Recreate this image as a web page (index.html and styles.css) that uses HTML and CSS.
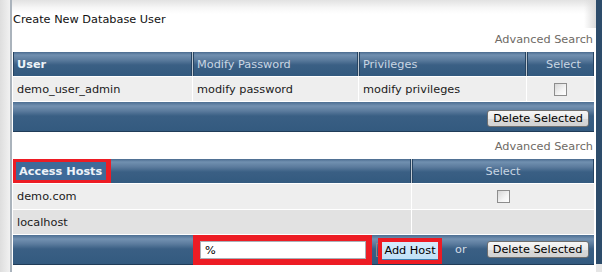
FILE: index.html
```html
<!DOCTYPE html>
<html>
<head>
<meta charset="utf-8">
<link rel="stylesheet" href="styles.css">
</head>
<body>
<div class="frame">
  <div class="side"></div>
  <div class="main">
    <div class="title">Create New Database User</div>
    <div class="adv">Advanced Search</div>
    <div class="grid">
      <div class="row head cols4">
        <div class="cell hc strong">User</div>
        <div class="cell hc">Modify Password</div>
        <div class="cell hc">Privileges</div>
        <div class="cell hc center">Select</div>
      </div>
      <div class="row body cols4 r1">
        <div class="cell">demo_user_admin</div>
        <div class="cell">modify password</div>
        <div class="cell">modify privileges</div>
        <div class="cell center"><input type="checkbox" class="cb"></div>
      </div>
      <div class="foot end">
        <button class="btn">Delete Selected</button>
      </div>
    </div>
    <div class="adv adv2">Advanced Search</div>
    <div class="grid">
      <div class="row head cols2">
        <div class="cell hc strong flush"><span class="mark hl">Access Hosts</span></div>
        <div class="cell hc center">Select</div>
      </div>
      <div class="row body cols2 r1 tall">
        <div class="cell">demo.com</div>
        <div class="cell center"><input type="checkbox" class="cb"></div>
      </div>
      <div class="row body cols2 r2">
        <div class="cell">localhost</div>
        <div class="cell"></div>
      </div>
      <div class="foot add">
        <span class="mark inbox"><input type="text" class="txt" value="%"></span>
        <span class="bracket"></span>
        <span class="mark addbox"><span class="addbtn">Add Host</span></span>
        <span class="or">or</span>
        <button class="btn">Delete Selected</button>
      </div>
    </div>
  </div>
  <div class="edge"></div>
</div>
</body>
</html>
```
FILE: styles.css
```css
html, body {
  margin: 0;
  padding: 0;
  background: #fff;
}
body {
  width: 602px;
  height: 272px;
  overflow: hidden;
  font-family: "DejaVu Sans", Verdana, sans-serif;
  font-size: 11.3px;
  color: #111;
}
.frame {
  display: flex;
  height: 272px;
}
.side {
  width: 10px;
  flex: none;
  border-right: 2px solid #aab3bc;
  background: linear-gradient(to right, #dedede, #f1f1f1);
}
.main {
  flex: 1;
  padding: 11px 2px 0 1px;
  background: linear-gradient(#e2e2e2 0, #f7f7f7 8px, #ffffff 14px);
  position: relative;
}
.main::after {
  content: "";
  position: absolute;
  right: 0;
  top: 0;
  width: 12px;
  height: 28px;
  background: linear-gradient(to right, rgba(255,255,255,0), #dcdcdc);
}
.edge {
  width: 6px;
  flex: none;
  background: linear-gradient(#2d4c6b 0, #2d4c6b 264px, #e6e6e6 264px);
}
.title {
  line-height: 18px;
  height: 18px;
}
.adv {
  margin-top: 3px;
  line-height: 16px;
  height: 16px;
  text-align: right;
  color: #6e6a65;
  padding-right: 1px;
  margin-bottom: 4px;
}
.adv2 {
  margin-top: 7px;
}
.grid {
  width: 581px;
  display: flex;
  flex-direction: column;
}
.row {
  display: grid;
  column-gap: 1px;
}
.cols4 {
  grid-template-columns: 179px 165px 167px 67px;
}
.cols2 {
  grid-template-columns: 398px 182px;
}
.head {
  height: 24px;
  background: #bfc8d1;
  border-bottom: 1px solid #fff;
}
.body {
  background: #fff;
  height: 24px;
  border-bottom: 1px solid #fff;
}
.body.tall {
  height: 25px;
}
.cell {
  display: flex;
  align-items: center;
  padding-left: 4px;
  white-space: nowrap;
}
.center {
  justify-content: center;
  padding-left: 0;
}
.hc {
  color: #c9d6e3;
  background: linear-gradient(#4a6b8f 0, #7190b0 3px, #5b7b9d 8px, #3a5f84 13px, #335a7f 100%);
  box-shadow: inset 1px 0 #264462, inset -1px 0 #264462;
}
.cols4 .hc.center {
  padding-left: 6px;
}
.strong {
  font-weight: bold;
  color: #eef3f8;
}
.r1 .cell {
  background: #eeeeee;
  color: #1a1a1a;
}
.r2 .cell {
  background: #e2e2e2;
  color: #1a1a1a;
}
.cb {
  appearance: none;
  -webkit-appearance: none;
  margin: 0;
  width: 13px;
  height: 13px;
  border: 1px solid #8d8d8d;
  background: linear-gradient(135deg, #d6d6d6, #f4f4f4 60%, #ffffff);
  box-sizing: border-box;
}
.foot {
  height: 30px;
  box-sizing: border-box;
  border-bottom: 1px solid #203c58;
  background: linear-gradient(#4c6e92 0, #7391b1 4px, #5b7b9d 9px, #3a5f84 14px, #335a7f 100%);
  display: flex;
  align-items: center;
}
.end {
  justify-content: flex-end;
  padding-right: 5px;
  padding-top: 3px;
}
.btn {
  width: 102px;
  height: 17px;
  padding: 0;
  margin: 0;
  font: inherit;
  color: #000;
  border: 1px solid #6f6f6f;
  border-radius: 3px;
  background: linear-gradient(#f6f6f6, #e9e9e9 50%, #d9d9d9 51%, #d2d2d2);
  line-height: 15px;
}
.flush {
  padding-left: 0;
  align-items: stretch;
}
.mark {
  border: 3px solid #ed1c24;
  box-sizing: border-box;
  display: inline-flex;
  align-items: center;
}
.hl {
  width: 98px;
  height: 24px;
  padding-left: 3px;
  background: #3e6a99;
  border-right-width: 5px;
}
.add {
  padding-left: 180px;
  align-items: stretch;
}
.inbox {
  border-width: 6px 6px 6px 7px;
  width: 179px;
  height: 30px;
  background: #fff;
}
.txt {
  width: 100%;
  height: 18px;
  box-sizing: border-box;
  margin: 0;
  border: 1px solid #a9b0b8;
  padding: 0 0 0 4px;
  font: inherit;
  color: #000;
  outline: none;
}
.bracket {
  width: 2px;
  height: 14px;
  align-self: center;
  margin-left: 4px;
  border: 1px solid #8a8a8a;
  border-right: none;
  box-sizing: border-box;
}
.addbox {
  align-self: flex-end;
  border-width: 4px;
  width: 64px;
  height: 26px;
}
.addbtn {
  display: block;
  width: 100%;
  height: 18px;
  line-height: 17px;
  background: linear-gradient(#d6ecfc, #c1e0f7);
  border-bottom: 1px solid #3c7fb1;
  box-sizing: border-box;
  color: #000;
  text-align: center;
}
.or {
  align-self: center;
  margin-left: 13px;
  margin-right: 20px;
  color: #d6dee7;
}
.add .btn {
  align-self: center;
}
```
